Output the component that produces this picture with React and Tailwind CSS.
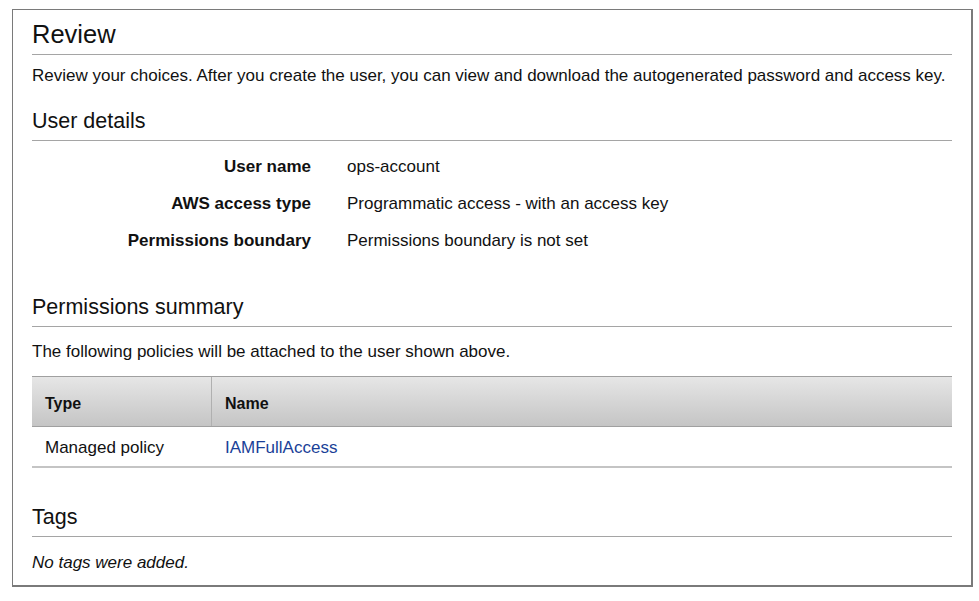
import React from 'react';

const details = [
  { label: 'User name', value: 'ops-account' },
  { label: 'AWS access type', value: 'Programmatic access - with an access key' },
  { label: 'Permissions boundary', value: 'Permissions boundary is not set' },
];

const SectionTitle = ({ children, className = '' }) => (
  <h2 className={`text-[21.5px] leading-[26px] pb-[6px] border-b border-[#a5a5a5] ${className}`}>{children}</h2>
);

const App = () => {
  return (
    <div className="min-h-[601px] bg-white pt-[9px] pl-[12px] text-[#111] font-['Liberation_Sans',Arial,sans-serif]">
      <div className="w-[961px] h-[578px] border border-[#7a7a7a] border-r-2 border-b-2 px-[19px] pt-[10px]">
        <h1 className="text-[25.5px] leading-[28px] pb-[6px] border-b border-[#a5a5a5]">Review</h1>
        <p className="mt-[11px] text-[17px] leading-[20px]">
          Review your choices. After you create the user, you can view and download the autogenerated password and access key.
        </p>

        <SectionTitle className="mt-[22px]">User details</SectionTitle>
        <div className="mt-[16px] grid grid-cols-[279px_1fr] gap-x-[36px] gap-y-[17px] text-[17px] leading-[20px]">
          {details.map((d) => (
            <React.Fragment key={d.label}>
              <div className="text-right font-bold">{d.label}</div>
              <div>{d.value}</div>
            </React.Fragment>
          ))}
        </div>

        <SectionTitle className="mt-[43px]">Permissions summary</SectionTitle>
        <p className="mt-[15px] text-[17px] leading-[20px]">The following policies will be attached to the user shown above.</p>

        <div className="mt-[14px] text-[17px]">
          <div className="flex h-[51px] border-t border-b border-[#a0a0a0] bg-linear-to-b from-[#e6e6e6] to-[#c5c5c5] font-bold text-[16px]">
            <div className="w-[180px] flex items-center pt-1 pl-[13px] border-r border-[#b0b0b0]">Type</div>
            <div className="flex-1 flex items-center pt-1 pl-[13px]">Name</div>
          </div>
          <div className="flex h-[41px] border-b-2 border-[#c4c4c4]">
            <div className="w-[180px] flex items-center pt-[3px] pl-[13px]">Managed policy</div>
            <div className="flex-1 flex items-center pt-[3px] pl-[13px]">
              <a href="#" className="text-[#1a3f98]">IAMFullAccess</a>
            </div>
          </div>
        </div>

        <SectionTitle className="mt-[36px]">Tags</SectionTitle>
        <p className="mt-[16px] text-[17px] leading-[20px] italic">No tags were added.</p>
      </div>
    </div>
  );
};

export default App;
